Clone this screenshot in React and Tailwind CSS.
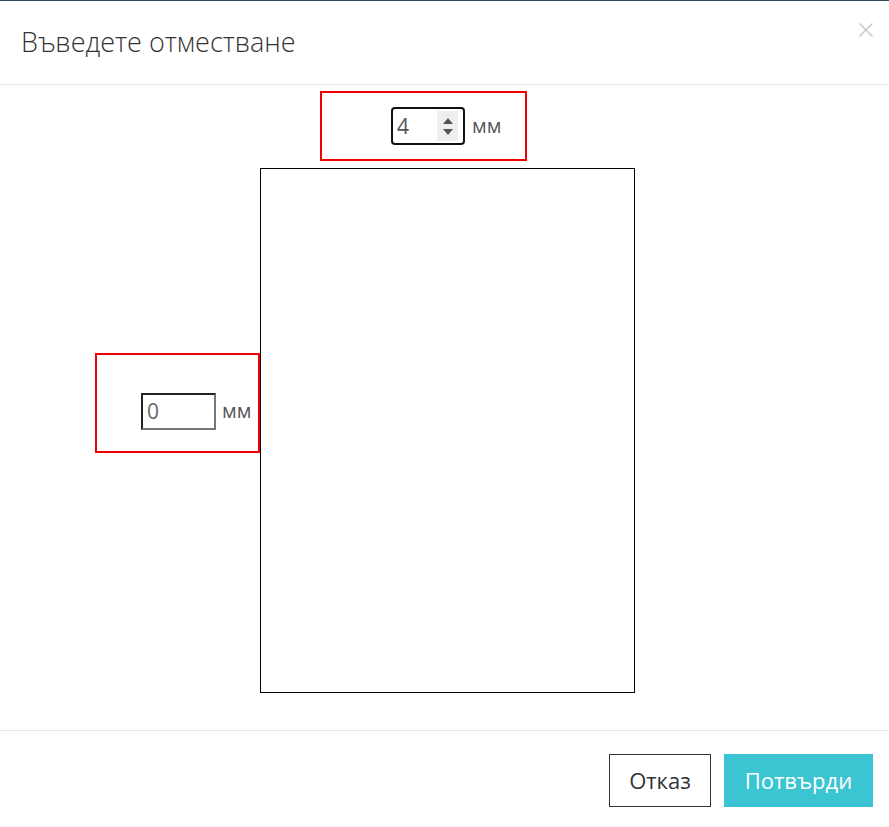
export default function App() {
  return (
    <div
      className="w-[889px] h-[827px] bg-white flex flex-col border-t border-[#2b4a5c] overflow-hidden"
      style={{ fontFamily: "'Open Sans', sans-serif" }}
    >
      {/* Header */}
      <div className="h-[84px] border-b border-[#e5e5e5] flex items-start justify-between pl-[21px] pr-[14px]">
        <h1 className="mt-[23px] text-[27px] font-light text-[#333] leading-[36px]">
          Въведете отместване
        </h1>
        <span className="mt-[11px] text-[32px] font-light text-[#c8c8c8] leading-[34px]">×</span>
      </div>

      {/* Body */}
      <div className="h-[646px] border-b border-[#e5e5e5] flex flex-col">
        <div className="ml-[320px] mt-[6px] w-[207px] h-[70px] border-2 border-[#f00000] flex items-center pl-[69px]">
          <div className="w-[74px] h-[38px] border-2 border-[#111] rounded-[4px] flex items-center pl-[4px] pr-[5px]">
            <span className="flex-1 text-[21px] text-[#555] leading-none">4</span>
            <div className="w-[21px] h-[30px] bg-[#efefef] flex flex-col items-center justify-center gap-[5px]">
              <svg width="10" height="6" viewBox="0 0 10 6">
                <path d="M5 0 L10 6 L0 6 Z" fill="#555" />
              </svg>
              <svg width="10" height="6" viewBox="0 0 10 6">
                <path d="M0 0 L10 0 L5 6 Z" fill="#555" />
              </svg>
            </div>
          </div>
          <span className="ml-[7px] text-[20px] text-[#555]">мм</span>
        </div>

        <div className="flex items-start mt-[7px] pl-[95px]">
          <div className="mt-[185px] w-[165px] h-[100px] border-2 border-[#f00000] flex items-start pt-[38px] pl-[44px]">
            <div className="w-[75px] h-[37px] border-2 border-t-[#222] border-l-[#222] border-b-[#777] border-r-[#777] flex items-center pl-[4px]">
              <span className="text-[21px] text-[#666] leading-none">0</span>
            </div>
            <span className="ml-[6px] mt-[4px] text-[20px] text-[#555] leading-[28px]">мм</span>
          </div>
          <div className="w-[375px] h-[525px] border border-black"></div>
        </div>
      </div>

      {/* Footer */}
      <div className="flex justify-end items-start gap-[13px] pt-[23px] pr-[16px]">
        <button className="w-[102px] h-[53px] border border-[#333] text-[22px] text-[#333] bg-white">
          Отказ
        </button>
        <button className="w-[149px] h-[53px] bg-[#3bc5d3] text-[22px] text-white">
          Потвърди
        </button>
      </div>
    </div>
  );
}
